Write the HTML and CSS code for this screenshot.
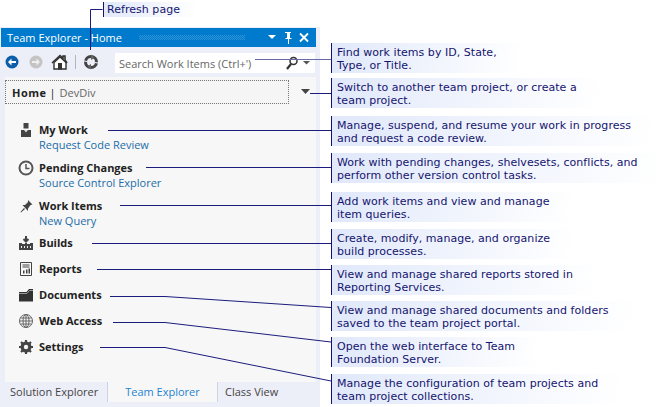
FILE: index.html
```html
<!DOCTYPE html>
<html lang="en">
<head>
<meta charset="utf-8">
<title>Team Explorer - Home</title>
<link rel="stylesheet" href="styles.css">
</head>
<body>
<div class="stage">
  <div class="top-note note">Refresh page</div>
  <div class="columns">
    <section class="panel">
      <header class="titlebar">
        <span class="title">Team Explorer - Home</span>
        <span class="grip"></span>
        <svg class="title-icons" width="42" height="14" viewBox="0 0 42 14"><path d="M0 4h8l-4 4z" fill="#fff"/><path d="M17 1h6v1h-1v5h1.500v1H21v5h-1V8h-2.500V7H19V2h-2z" fill="#fff"/><path d="M32 2.500l8 8M40 2.500l-8 8" stroke="#fff" stroke-width="1.800" fill="none"/></svg>
      </header>
      <div class="toolbar">
        <svg class="tool-icons" width="100" height="20" viewBox="0 0 100 20">
          <circle cx="11" cy="9" r="6.500" fill="#0c5ea8"/><path d="M7 9l3.500-3.500V8H15v2h-4.500v2.500z" fill="#fff"/>
          <circle cx="35" cy="9" r="6.500" fill="#c4c4c4"/><path d="M39 9l-3.500-3.500V8H31v2h4.500v2.500z" fill="#eee"/>
          <path d="M53 16V9.500l6-5.500 6 5.500V16z" fill="#fff" stroke="#333" stroke-width="1.400"/><path d="M51 10l8-7.500 3 2.800V3h2v4l2 3" fill="none" stroke="#333" stroke-width="1.600"/><rect x="57" y="10" width="4" height="6.500" fill="#333"/>
          <path d="M74.500 2v14" stroke="#b5b5b5"/>
          <circle cx="90" cy="9" r="5.500" fill="none" stroke="#444" stroke-width="3"/><path d="M90 1.500l3.500 3.500L90 7zM90 11l-3.500 2L90 16.500z" fill="#666"/><path d="M83 8l3 .5M97 10l-3-.5" stroke="#eceef8" stroke-width="1.200"/>
        </svg>
        <div class="search">
          <span class="search-text">Search Work Items (Ctrl+')</span>
          <svg width="26" height="14" viewBox="0 0 26 14"><circle cx="8.500" cy="5" r="3.500" fill="none" stroke="#333" stroke-width="1.500"/><path d="M6 8l-4 5" stroke="#333" stroke-width="2.200"/><path d="M18 5h7l-3.500 3.500z" fill="#555"/></svg>
        </div>
      </div>
      <div class="content">
        <div class="home-row">
          <div class="home-box"><b>Home</b><span class="sep">|</span><span class="project">DevDiv</span></div>
          <svg width="9" height="6" viewBox="0 0 9 6"><path d="M0 0h9L4.500 5z" fill="#444"/></svg>
        </div>
        <div class="nav">
          <div class="nav-item tall">
            <svg class="ico" width="16" height="16" viewBox="0 0 16 16"><path d="M5.500 1h5v5.500h-5z" fill="#444" /><path d="M3 8h10v7H3z" fill="#444"/><path d="M6 8h4L8 10.500z" fill="#ddd"/></svg>
            <div><div class="nav-title">My Work</div><div class="nav-link">Request Code Review</div></div>
          </div>
          <div class="nav-item tall">
            <svg class="ico" width="16" height="16" viewBox="0 0 16 16"><circle cx="8" cy="8" r="6.500" fill="none" stroke="#555" stroke-width="2"/><path d="M8 4v4.500h3.500" fill="none" stroke="#555" stroke-width="1.500"/></svg>
            <div><div class="nav-title">Pending Changes</div><div class="nav-link">Source Control Explorer</div></div>
          </div>
          <div class="nav-item tall short">
            <svg class="ico" width="16" height="16" viewBox="0 0 16 16"><path d="M10 2l4.500 4.500-2 .5-2.500 3.500v2.500L4.500 7H7l3-3zM6 10l-3.500 4 .5.5 4-3.500z" fill="#444"/></svg>
            <div><div class="nav-title">Work Items</div><div class="nav-link">New Query</div></div>
          </div>
          <div class="nav-item">
            <svg class="ico" width="16" height="16" viewBox="0 0 16 16"><path d="M8 1v5M5.500 4L8 6.500 10.500 4" fill="none" stroke="#444" stroke-width="2"/><path d="M1 8h3v1h3V8h2v1h3V8h3v7H1z" fill="#444"/><path d="M3 11h1v2H3zM6 11h1v2H6zM9 11h1v2H9zM12 11h1v2h-1z" fill="#eee"/></svg>
            <div class="nav-title">Builds</div>
          </div>
          <div class="nav-item">
            <svg class="ico" width="16" height="16" viewBox="0 0 16 16"><path d="M2.500 1.500h11v13h-11z" fill="#f7f7f7" stroke="#444"/><path d="M4.500 3.500h7v1h-7zM4.500 5.500h7v1h-7zM5 12.500V9.500h1.500v3zM8 12.500V8.500h1.500v4zM10.500 12.500V7.500H12v5z" fill="#444"/></svg>
            <div class="nav-title">Reports</div>
          </div>
          <div class="nav-item">
            <svg class="ico" width="16" height="16" viewBox="0 0 16 16"><path d="M1 14.500V5h7.500L11 2h4v12.500z" fill="#333"/><path d="M1 6.500h8l2.500-3H15" fill="none" stroke="#999"/></svg>
            <div class="nav-title">Documents</div>
          </div>
          <div class="nav-item">
            <svg class="ico" width="16" height="16" viewBox="0 0 16 16"><g fill="none" stroke="#666"><circle cx="8" cy="8" r="6.500"/><ellipse cx="8" cy="8" rx="3" ry="6.500"/><path d="M8 1.500v13M1.500 8h13M2.500 5h11M2.500 11h11"/></g></svg>
            <div class="nav-title">Web Access</div>
          </div>
          <div class="nav-item">
            <svg class="ico" width="16" height="16" viewBox="0 0 16 16"><circle cx="8" cy="8" r="4" fill="none" stroke="#444" stroke-width="3"/><path d="M8 1v14M1 8h14M3 3l10 10M13 3L3 13" stroke="#444" stroke-width="2.200"/><circle cx="8" cy="8" r="2.200" fill="#f7f7f7"/></svg>
            <div class="nav-title">Settings</div>
          </div>
        </div>
      </div>
      <nav class="tabs">
        <span class="tab first">Solution Explorer</span>
        <span class="tab active">Team Explorer</span>
        <span class="tab last">Class View</span>
      </nav>
    </section>
    <div class="notes">
      <div class="note">Find work items by ID, State,<br>Type, or Title.</div>
      <div class="note">Switch to another team project, or create a<br>team project.</div>
      <div class="note">Manage, suspend, and resume your work in progress<br>and request a code review.</div>
      <div class="note">Work with pending changes, shelvesets, conflicts, and<br>perform other version control tasks.</div>
      <div class="note">Add work items and view and manage<br>item queries.</div>
      <div class="note">Create, modify, manage, and organize<br>build processes.</div>
      <div class="note">View and manage shared reports stored in<br>Reporting Services.</div>
      <div class="note">View and manage shared documents and folders<br>saved to the team project portal.</div>
      <div class="note">Open the web interface to Team<br>Foundation Server.</div>
      <div class="note">Manage the configuration of team projects and<br>team project collections.</div>
    </div>
  </div>
  <svg class="leaders" width="662" height="407" viewBox="0 0 662 407">
    <g fill="none" stroke="#1c1c7c" stroke-width="1">
      <path d="M90.500 50V9.500h12"/>
      <path d="M255 59.500h76" stroke="#6a6aa8"/>
      <path d="M310 93.500h21"/>
      <path d="M108 130.500h223"/>
      <path d="M146 167.500h185"/>
      <path d="M120 205.500h211"/>
      <path d="M92 243.500h239"/>
      <path d="M97 269.500h234"/>
      <path d="M110 296.500h55l166 11"/>
      <path d="M113 322.500h52l166 19.500"/>
      <path d="M100 347.500h65l166 33.500"/>
    </g>
  </svg>
</div>
</body>
</html>
```
FILE: styles.css
```css
* { box-sizing: border-box; }
html, body { margin: 0; padding: 0; background: #fff; }
.stage { position: relative; width: 662px; height: 407px; overflow: hidden; }
.columns { display: flex; position: absolute; top: 0; left: 0; width: 662px; height: 407px; }
.panel { width: 320px; margin-top: 27px; height: 380px; background: #eceef8; display: flex; flex-direction: column; font-family: "Open Sans", sans-serif; font-size: 11px; padding: 1px 4px 0 1px; white-space: nowrap; }
.titlebar { height: 19px; background: #007acc; display: flex; align-items: center; padding: 0 6px 0 6px; color: #fff; flex: none; }
.title { font-size: 11px; }
.grip { flex: 1; height: 5px; margin: 0 23px 0 17px; background: repeating-conic-gradient(#2e92d8 0 25%, #007acc 0 50%) 0 0 / 2px 2px; }
.title-icons { flex: none; }
.toolbar { height: 30px; display: flex; align-items: flex-start; flex: none; padding-top: 6px; }
.tool-icons { flex: none; margin-right: 14px; margin-top: 0; }
.search { width: 200px; height: 20px; background: #fff; display: flex; align-items: center; justify-content: space-between; padding: 0 4px; color: #666; }
.content { flex: 1; margin-left: 4px; background: #f7f7f7; display: flex; flex-direction: column; }
.home-row { display: flex; align-items: center; gap: 12px; padding-top: 3px; flex: none; }
.home-box { width: 284px; height: 24px; background: #f5f5f5; border: 1px dotted #777; display: flex; align-items: center; padding-left: 6px; color: #666; }
.home-box b { color: #222; font-weight: 700; letter-spacing: .5px; }
.sep { margin: 0 4px 0 3px; color: #222; }
.nav { flex: 1; padding: 18px 0 0 13px; display: flex; flex-direction: column; }
.nav-item { display: flex; align-items: flex-start; gap: 5px; height: 26px; }
.nav-item.tall { height: 38px; }
.nav-item.short { height: 37px; }
.ico { flex: none; }
.nav-title { font-weight: 700; color: #222; line-height: 15px; }
.nav-link { color: #1b6ca8; line-height: 15px; }
.tabs { height: 20px; flex: none; display: flex; margin-bottom: 5px; margin-left: 4px; }
.tab { color: #444; height: 20px; line-height: 20px; }
.tab.first { border-right: 1px solid #cdd2e4; width: 103px; padding-left: 5px; }
.tab.active { background: #f7f7f7; color: #1f83cf; width: 110px; text-align: center; border-right: 1px solid #cdd2e4; }
.tab.last { padding-left: 7px; }
.notes { display: flex; flex-direction: column; padding: 43px 0 0 11px; }
.note { height: 30px; width: fit-content; padding: 3px 22px 0 5px; border-left: 1px solid #14146e; background: linear-gradient(100deg, #e0e8fa, #fff); font-family: "DejaVu Sans", Verdana, sans-serif; font-size: 11px; letter-spacing: .04px; line-height: 13px; color: #14146e; white-space: nowrap; }
.note:nth-child(2) { margin-top: 5px; }
.note:nth-child(3) { margin-top: 8px; }
.note:nth-child(4) { margin-top: 7px; }
.note:nth-child(5) { margin-top: 9px; }
.note:nth-child(6) { margin-top: 7px; }
.note:nth-child(7), .note:nth-child(8), .note:nth-child(9) { margin-top: 6px; }
.note:nth-child(10) { margin-top: 7px; }
.top-note { position: absolute; left: 103px; top: 2px; height: 15px; padding: 1px 16px 0 3px; line-height: 14px; z-index: 2; }
.leaders { position: absolute; left: 0; top: 0; pointer-events: none; }
```
